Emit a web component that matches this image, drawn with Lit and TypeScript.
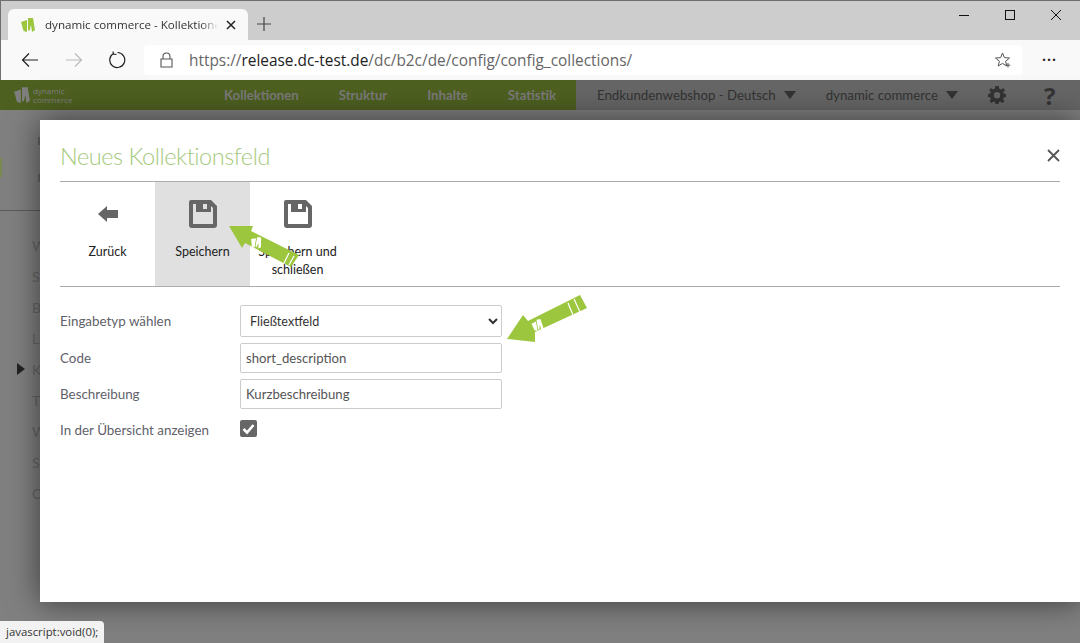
import {LitElement, html, css, svg} from 'lit';
import {customElement} from 'lit/decorators.js';

// little block logo, used in the tab, the header and on the arrows
const logoMark = (c: string) => svg`
  <path fill=${c} d="M1 5 L7 3 V15 L3.500 14 Z"/>
  <path fill=${c} d="M8 1 H13 L15 13 L12 15 L11 8 L9.500 14 L8 13 Z"/>
`;

const saveIcon = html`<svg width="30" height="30" viewBox="0 0 30 30">
  <path fill="#666" fill-rule="evenodd" d="M3 1 H23 L29 7 V26 Q29 29 26 29 H4 Q1 29 1 26 V3 Q1 1 3 1 Z
    M5 5 V25 H25 V9 L23 7 V13 H8 V5 Z M15 5 V10 H19 V5 Z"/>
</svg>`;

const nav = ['Kollektionen', 'Struktur', 'Inhalte', 'Statistik'];
const sideLetters = ['W', 'S', 'B', 'L', 'K', 'T', 'W', 'S', 'C'];

@customElement('app-root')
export class AppRoot extends LitElement {
  static styles = css`
    :host {
      display: block;
      position: relative;
      width: 1080px;
      height: 643px;
      overflow: hidden;
      font-family: 'Lato', 'Open Sans', sans-serif;
      background: #808080;
    }
    .titlebar {
      display: flex;
      height: 40px;
      background: #cdcdcd;
      border-top: 1px solid #6f6f6f;
      border-left: 1px solid #6f6f6f;
      box-sizing: border-box;
      padding-left: 7px;
      align-items: flex-end;
    }
    .tab {
      display: flex;
      align-items: center;
      width: 240px;
      height: 31px;
      box-sizing: border-box;
      padding: 0 12px;
      background: #f9f9f9;
      border-radius: 6px 6px 0 0;
      font: 11.600px 'Open Sans', sans-serif;
      color: #333;
    }
    .tab-title {
      flex: 1;
      margin-left: 9px;
      white-space: nowrap;
      overflow: hidden;
      -webkit-mask-image: linear-gradient(to right, #000 90%, transparent);
      mask-image: linear-gradient(to right, #000 90%, transparent);
    }
    .tab-close {
      display: block;
      margin-left: 8px;
    }
    .new-tab {
      align-self: center;
      margin: 6px 0 0 8px;
    }
    .win-buttons {
      margin-left: auto;
      align-self: flex-start;
      display: flex;
      gap: 36px;
      padding: 7px 19px 0 0;
    }
    .win-buttons svg {
      display: block;
    }
    .toolbar {
      display: flex;
      align-items: center;
      height: 40px;
      background: #f9f9f9;
      border-left: 1px solid #6f6f6f;
      box-sizing: border-box;
      padding: 1px 0 1px 20px;
    }
    .toolbar .back { margin-right: 26px; }
    .toolbar .forward { margin-right: 25px; }
    .url {
      display: flex;
      align-items: center;
      width: 878px;
      height: 30px;
      margin-left: 18px;
      box-sizing: border-box;
      padding: 0 11px 0 16px;
      background: #fff;
      border-radius: 4px;
      font: 15.400px 'Open Sans', sans-serif;
      color: #666;
    }
    .url .addr { margin-left: 16px; flex: 1; white-space: nowrap; }
    .url .host { color: #222; }
    .more {
      margin-left: 20px;
      color: #222;
      font: 700 14px 'Open Sans', sans-serif;
      letter-spacing: 1px;
      line-height: 10px;
      padding-bottom: 8px;
    }
    .appbar {
      display: flex;
      height: 30px;
      color: #7a7a7a;
      font-size: 13.200px;
    }
    .appbar .left {
      display: flex;
      align-items: center;
      flex: none;
      width: 576px;
      box-sizing: border-box;
      padding-left: 13px;
      background: #4e6020;
    }
    .brand {
      display: flex;
      flex: none;
      align-items: center;
      gap: 2px;
      width: 211px;
      font: 8px/9px 'Open Sans', sans-serif;
      color: #7f7f7f;
    }
    .navlist {
      display: flex;
      gap: 40px;
      white-space: nowrap;
    }
    .navitem { font-weight: 700; }
    .appbar .right {
      flex: 1;
      display: flex;
      align-items: center;
      background: #666;
      color: #333;
      padding-left: 21px;
      font-size: 13.250px;
    }
    .caret {
      width: 0;
      height: 0;
      border-left: 6.500px solid transparent;
      border-right: 6.500px solid transparent;
      border-top: 8px solid #333;
      margin: 0 30px 0 8px;
    }
    .help {
      margin-left: 38px;
      font: 700 24px 'Open Sans', sans-serif;
      color: #333;
    }
    .page {
      height: 533px;
      background: #808080;
    }
    .page-top {
      display: flex;
      height: 101px;
      border-bottom: 1px solid #5c5c5c;
      box-sizing: border-box;
    }
    .accent {
      width: 2px;
      height: 19px;
      margin-top: 48px;
      background: #7a8a50;
    }
    .stubs {
      display: flex;
      flex-direction: column;
      gap: 29px;
      padding: 27px 0 0 36px;
    }
    .stubs span {
      display: block;
      width: 3px;
      height: 8px;
      background: #666;
    }
    .side {
      display: flex;
      flex-direction: column;
      padding: 19px 0 0 32px;
      font-size: 14px;
      color: #666;
      line-height: 31px;
    }
    .side .row { position: relative; height: 31px; }
    .side .marker {
      position: absolute;
      left: -15px;
      top: 9px;
      border-left: 8px solid #222;
      border-top: 6px solid transparent;
      border-bottom: 6px solid transparent;
    }
    .modal {
      position: absolute;
      left: 40px;
      top: 120px;
      width: 1040px;
      height: 482px;
      box-sizing: border-box;
      padding: 0 20px;
      background: #fff;
      box-shadow: 0 0 30px rgba(0, 0, 0, 0.55);
    }
    .head {
      display: flex;
      align-items: center;
      justify-content: space-between;
      height: 62px;
      border-bottom: 1px solid #aaa;
      box-sizing: border-box;
    }
    .head svg { margin-top: 10px; }
    h1 {
      margin: 10px 0 0;
      font-size: 23.500px;
      letter-spacing: -0.45px;
      font-weight: 300;
      color: #a5c97d;
    }
    .actions {
      display: flex;
      height: 105px;
      border-bottom: 1px solid #aaa;
      box-sizing: border-box;
    }
    .action {
      width: 95px;
      box-sizing: border-box;
      padding-top: 17px;
      display: flex;
      flex-direction: column;
      align-items: center;
      text-align: center;
      font-size: 12.500px;
      line-height: 18px;
      color: #222;
    }
    .action.on { background: #e0e0e0; }
    .action .ico {
      height: 30px;
      display: flex;
      align-items: center;
      margin-bottom: 14px;
    }
    .form {
      display: grid;
      grid-template-columns: 180px 262px;
      grid-template-rows: 32px 30px 30px 30px;
      row-gap: 6px;
      align-items: center;
      margin-top: 18px;
      font-size: 13.400px;
      color: #5f626a;
    }
    select, input {
      box-sizing: border-box;
      width: 262px;
      border: 1px solid #ccc;
      border-radius: 2px;
      background: #fff;
      font: 13.150px 'Lato', sans-serif;
      color: #555;
      margin: 0;
      outline: none;
    }
    select { height: 32px; padding: 0 5px; font-size: 12.600px; color: #333; }
    input { height: 30px; padding: 0 5px; }
    .check {
      align-self: start;
      width: 17px;
      height: 17px;
      border-radius: 2px;
      background: #666;
      margin-top: 5px;
    }
    .check svg { display: block; }
    .arrow {
      position: absolute;
      left: 0;
      top: 0;
      pointer-events: none;
    }
    .status {
      position: absolute;
      left: 0;
      bottom: 0;
      height: 22px;
      width: 104px;
      box-sizing: border-box;
      padding-left: 6px;
      background: #f2f2f2;
      border-radius: 0 4px 0 0;
      font: 11.400px/22px 'Open Sans', sans-serif;
      color: #333;
      white-space: nowrap;
    }
  `;

  render() {
    return html`
      <div class="titlebar">
        <div class="tab">
          <svg width="16" height="16" viewBox="0 0 16 16">${logoMark('#9dc63f')}</svg>
          <span class="tab-title">dynamic commerce - Kollektionen</span>
          <svg class="tab-close" width="10" height="10" viewBox="0 0 10 10">
            <path d="M1 1 L9 9 M9 1 L1 9" stroke="#222" stroke-width="1.500"/>
          </svg>
        </div>
        <svg class="new-tab" width="16" height="16" viewBox="0 0 16 16">
          <path d="M8 1 V15 M1 8 H15" stroke="#444" stroke-width="1.200"/>
        </svg>
        <div class="win-buttons">
          <svg width="10" height="14" viewBox="0 0 10 14"><path d="M0 7.500 H10" stroke="#111"/></svg>
          <svg width="10" height="14" viewBox="0 0 10 14"><rect x="0.500" y="2.500" width="9" height="9" fill="none" stroke="#111"/></svg>
          <svg width="10" height="14" viewBox="0 0 10 14"><path d="M0 2 L10 12 M10 2 L0 12" stroke="#111"/></svg>
        </div>
      </div>
      <div class="toolbar">
        <svg class="back" width="18" height="16" viewBox="0 0 18 16">
          <path d="M17 8 H1.500 M8 1.500 L1.500 8 L8 14.500" fill="none" stroke="#222" stroke-width="1.200"/>
        </svg>
        <svg class="forward" width="18" height="16" viewBox="0 0 18 16">
          <path d="M1 8 H16.500 M10 1.500 L16.500 8 L10 14.500" fill="none" stroke="#bbb" stroke-width="1.200"/>
        </svg>
        <svg width="18" height="18" viewBox="0 0 18 18">
          <path d="M5.500 2.500 A7.500 7.500 0 1 0 9.500 1.500 M5 0.500 L5.500 3 L8.500 3.500" fill="none" stroke="#222" stroke-width="1.200"/>
        </svg>
        <div class="url">
          <svg width="13" height="16" viewBox="0 0 13 16">
            <path d="M3 7 V4.500 A3.500 3.500 0 0 1 10 4.500 V7 M1 7 H12 V15 H1 Z" fill="none" stroke="#555" stroke-width="1.100"/>
          </svg>
          <span class="addr">https://<span class="host">release.dc-test.de</span>/dc/b2c/de/config/config_collections/</span>
          <svg width="16" height="16" viewBox="0 0 16 16">
            <path d="M7.500 1 L9.400 5.600 L14.500 6 L10.600 9.200 L11.800 14 L7.500 11.400 L3.200 14 L4.400 9.200 L0.500 6 L5.600 5.600 Z M13 11 V15.500 M10.800 13.200 H15.300" fill="none" stroke="#555"/>
          </svg>
        </div>
        <span class="more">...</span>
      </div>
      <div class="appbar">
        <div class="left">
          <div class="brand">
            <svg width="18" height="18" viewBox="0 0 16 16">${logoMark('#7f7f7f')}</svg>
            <span>dynamic<br />commerce</span>
          </div>
          <div class="navlist">
            ${nav.map((n) => html`<span class="navitem">${n}</span>`)}
          </div>
        </div>
        <div class="right">
          <span>Endkundenwebshop - Deutsch</span>
          <span class="caret"></span>
          <span>dynamic commerce</span>
          <span class="caret"></span>
          <svg width="18" height="18" viewBox="0 0 18 18">
            <path fill="#333" fill-rule="evenodd" d="M7.300 0 H10.700 L11.200 2.500 L13.300 3.400 L15.500 2 L17 4.400 L15.200 6.100 L15.700 7.500 L18 8 V11 L15.700 11.500 L15.100 13.200 L16.400 15.300 L14.200 17 L12.300 15.400 L10.800 16 L10.500 18 H7.500 L7.100 16 L5.500 15.400 L3.600 17 L1.500 15.200 L2.900 13.100 L2.300 11.500 L0 11 V8 L2.300 7.500 L2.900 6 L1.200 4.300 L3 2 L5 3.400 L6.800 2.500 Z M9 6 A3.200 3.200 0 1 0 9 12.400 A3.200 3.200 0 1 0 9 6 Z"/>
          </svg>
          <span class="help">?</span>
        </div>
      </div>
      <div class="page">
        <div class="page-top">
          <div class="accent"></div>
          <div class="stubs"><span></span><span></span></div>
        </div>
        <div class="side">
          ${sideLetters.map(
            (l, i) => html`<div class="row">${i === 4 ? html`<span class="marker"></span>` : ''}${l}</div>`
          )}
        </div>
      </div>

      <div class="modal">
        <div class="head">
          <h1>Neues Kollektionsfeld</h1>
          <svg width="13" height="13" viewBox="0 0 13 13">
            <path d="M1 1 L12 12 M12 1 L1 12" stroke="#555" stroke-width="1.800"/>
          </svg>
        </div>
        <div class="actions">
          <div class="action">
            <span class="ico">
              <svg width="20" height="18" viewBox="0 0 20 18"><path fill="#666" d="M0 9 L9 1 V5 H20 V13 H9 V17 Z"/></svg>
            </span>
            Zurück
          </div>
          <div class="action on"><span class="ico">${saveIcon}</span>Speichern</div>
          <div class="action"><span class="ico">${saveIcon}</span>Speichern und schließen</div>
        </div>
        <div class="form">
          <label>Eingabetyp wählen</label>
          <select><option>Fließtextfeld</option></select>
          <label>Code</label>
          <input value="short_description" />
          <label>Beschreibung</label>
          <input value="Kurzbeschreibung" />
          <label>In der Übersicht anzeigen</label>
          <div class="check">
            <svg width="17" height="17" viewBox="0 0 17 17">
              <path d="M3.500 9 L7 12.500 L13.500 5" fill="none" stroke="#fff" stroke-width="2.600"/>
            </svg>
          </div>
        </div>
      </div>

      <svg class="arrow" width="1080" height="643" viewBox="0 0 1080 643">
        <path fill="#9dc63f" d="M229 226 L253 226 L251 231 L299 255 L291 267 L245 243 L242 248 Z"/>
        <path d="M289 253 L284 263 M294 256 L289 265" stroke="#fff" stroke-width="1.200"/>
        <g transform="translate(251 235) rotate(10) scale(0.8)">${logoMark('#fff')}</g>
        <path fill="#9dc63f" d="M507 339 L523 315 L528 321 L580 295 L587 308 L535 332 L535 342 Z"/>
        <path d="M568 303 L573 315 M574 299 L580 312" stroke="#fff" stroke-width="1.200"/>
        <g transform="translate(530 320) rotate(-10) scale(0.8)">${logoMark('#fff')}</g>
      </svg>

      <div class="status">javascript:void(0);</div>
    `;
  }
}
